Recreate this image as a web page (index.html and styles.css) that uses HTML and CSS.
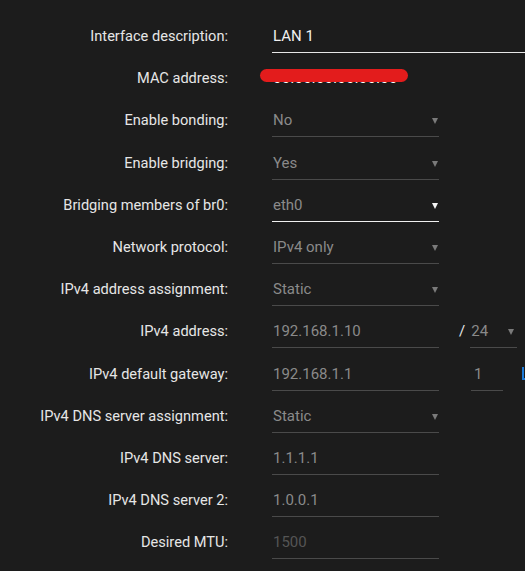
FILE: index.html
```html
<!DOCTYPE html>
<html lang="en">
  <head>
    <meta charset="UTF-8" />
    <title>Interface settings</title>
    <link rel="stylesheet" href="styles.css">
  </head>
  <body>
    <form class="settings">
      <div class="row">
        <label>Interface description:</label>
        <div class="field wide focused text-bright">LAN 1</div>
      </div>

      <div class="row">
        <label>MAC address:</label>
        <div class="mac">
          <span class="mac-value">00:00:00:00:00:00</span>
          <span class="redact"></span>
        </div>
      </div>

      <div class="row">
        <label>Enable bonding:</label>
        <div class="field select">No</div>
      </div>

      <div class="row">
        <label>Enable bridging:</label>
        <div class="field select">Yes</div>
      </div>

      <div class="row">
        <label>Bridging members of br0:</label>
        <div class="field select active">eth0</div>
      </div>

      <div class="row">
        <label>Network protocol:</label>
        <div class="field select">IPv4 only</div>
      </div>

      <div class="row">
        <label>IPv4 address assignment:</label>
        <div class="field select">Static</div>
      </div>

      <div class="row">
        <label>IPv4 address:</label>
        <div class="field">192.168.1.10</div>
        <span class="slash">/</span>
        <div class="field select prefix">24</div>
      </div>

      <div class="row">
        <label>IPv4 default gateway:</label>
        <div class="field">192.168.1.1</div>
        <div class="field metric">1</div>
        <span class="blue-mark"></span>
      </div>

      <div class="row">
        <label>IPv4 DNS server assignment:</label>
        <div class="field select">Static</div>
      </div>

      <div class="row">
        <label>IPv4 DNS server:</label>
        <div class="field">1.1.1.1</div>
      </div>

      <div class="row">
        <label>IPv4 DNS server 2:</label>
        <div class="field">1.0.0.1</div>
      </div>

      <div class="row">
        <label>Desired MTU:</label>
        <div class="field placeholder">1500</div>
      </div>
    </form>
  </body>
</html>
```

FILE: styles.css
```css
html {
  font-size: 14.6px;
}

body {
  margin: 0;
  background-color: #1c1c1c;
  font-family: Roboto, "Liberation Sans", sans-serif;
  overflow: hidden;
}

.settings {
  padding-top: 15px;
  display: flex;
  flex-flow: column;
}

.row {
  height: 42.2px;
  display: flex;
  align-items: flex-start;
}

.row > label {
  width: 228px;
  flex: none;
  text-align: right;
  line-height: 42px;
  color: #e6e6e6;
  margin-right: 44px;
}

.field {
  position: relative;
  width: 167px;
  flex: none;
  box-sizing: border-box;
  padding: 12px 0 7px 1px;
  font-size: 15px;
  line-height: 18px;
  height: 38px;
  border-bottom: 1px solid #4a4a4a;
  color: #8a8a8a;
}

.field.wide {
  width: 260px;
}

.focused {
  border-bottom-color: #e6e6e6;
}

.text-bright {
  color: #f0f0f0;
}

.placeholder {
  color: #555555;
}

.select::after {
  content: "";
  position: absolute;
  right: 1px;
  top: 19px;
  border-left: 3px solid transparent;
  border-right: 3px solid transparent;
  border-top: 6px solid #7a7a7a;
}

.select.active {
  border-bottom-color: #f0f0f0;
}

.select.active::after {
  border-top-color: #f5f5f5;
}

.slash {
  margin-left: 20px;
  line-height: 42px;
  color: #e6e6e6;
  font-size: 15px;
}

.field.prefix {
  width: 47px;
  margin-left: 5px;
  padding-left: 1px;
}

.field.prefix::after {
  right: 3px;
}

.field.metric {
  width: 32px;
  margin-left: 32px;
  padding-left: 3px;
}

.blue-mark {
  margin-left: 19px;
  margin-top: 14px;
  width: 3px;
  height: 11px;
  border-left: 2px solid #1e7ad6;
  border-bottom: 2px solid #1e7ad6;
}

.mac {
  position: relative;
  line-height: 42px;
}

.mac-value {
  color: #ffffff;
  margin-left: 1px;
  letter-spacing: 0.5px;
}

.redact {
  position: absolute;
  left: -12px;
  top: 12px;
  width: 148px;
  height: 13px;
  border-radius: 7px;
  background-color: #e31c1c;
}
```
